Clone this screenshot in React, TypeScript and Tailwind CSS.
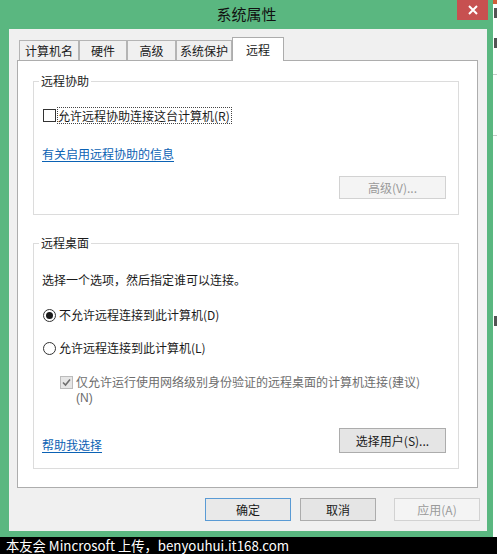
import { ReactNode } from "react";

const cjk = "font-['Microsoft_YaHei_UI','Noto_Sans_CJK_SC',sans-serif]";

function Tab({ label, w, active }: { label: string; w: string; active?: boolean }) {
  if (active) {
    return (
      <div
        className={`relative z-10 -mb-px flex h-[24px] items-center justify-center border border-b-0 border-[#acacac] bg-white text-[12px] text-[#1a1a1a] ${w}`}
      >
        {label}
      </div>
    );
  }
  return (
    <div
      className={`flex h-[20px] items-center justify-center border border-b-0 border-[#b4b4b4] bg-[#f0f0f0] text-[12px] text-[#1a1a1a] ${w}`}
    >
      {label}
    </div>
  );
}

function GroupBox({ title, h, children }: { title: string; h: string; children: ReactNode }) {
  return (
    <div className={`ml-[15px] flex w-[426px] flex-col border border-[#dcdcdc] ${h}`}>
      <div className="-mt-[7px] ml-[5px] h-[12px] w-fit bg-white px-[2px] text-[12px] leading-[12px] text-[#1a1a1a]">
        {title}
      </div>
      {children}
    </div>
  );
}

function Button({ label, w, h = "h-[23px]", disabled, focused }: { label: string; w: string; h?: string; disabled?: boolean; focused?: boolean }) {
  let tone = "border-[#acacac] bg-[#e5e5e5] text-[#1a1a1a]";
  if (disabled) tone = "border-[#d2d2d2] bg-[#f4f4f4] text-[#9a9a9a]";
  if (focused) tone = "border-[#5a9bd5] bg-[#e9e9e9] text-[#1a1a1a]";
  return (
    <div className={`flex items-center justify-center border text-[12px] ${tone} ${w} ${h}`}>
      {label}
    </div>
  );
}

function Radio({ checked }: { checked?: boolean }) {
  return (
    <div className="flex h-[13px] w-[13px] shrink-0 items-center justify-center rounded-full border border-[#333] bg-white">
      {checked && <div className="h-[7px] w-[7px] rounded-full bg-[#1a1a1a]" />}
    </div>
  );
}

function Check({ disabled }: { disabled?: boolean }) {
  if (!disabled) {
    return <div className="h-[13px] w-[13px] shrink-0 border border-[#333] bg-white" />;
  }
  return (
    <div className="flex h-[13px] w-[13px] shrink-0 items-center justify-center border border-[#bcbcbc] bg-[#e6e6e6]">
      <svg width="9" height="9" viewBox="0 0 9 9">
        <path d="M1 4.5 L3.5 7 L8 1.5" fill="none" stroke="#6f6f6f" strokeWidth="1.6" />
      </svg>
    </div>
  );
}

export default function App() {
  return (
    <div className={`flex h-[554px] w-[497px] flex-col overflow-hidden bg-black ${cjk}`}>
      <div className="flex h-[537px]">
        {/* window */}
        <div className="flex w-[493px] flex-col bg-[#5ab780]">
          <div className="grid h-[29px] grid-cols-[1fr_auto_1fr]">
            <div />
            <div className="pt-[4px] text-[15px] leading-[20px] text-[#111]">系统属性</div>
            <div className="flex justify-end">
              <div className="mr-[5px] flex h-[20px] w-[31px] items-center justify-center bg-[#c75050]">
                <svg width="10" height="10" viewBox="0 0 10 10">
                  <path d="M1 1 L9 9 M9 1 L1 9" stroke="white" strokeWidth="2" />
                </svg>
              </div>
            </div>
          </div>

          <div className="ml-[9px] flex h-[502px] w-[478px] flex-col bg-[#f0f0f0] pt-[8px]">
            <div className="ml-[10px] flex h-[23px] items-end">
              <Tab label="计算机名" w="w-[60px]" />
              <Tab label="硬件" w="w-[48px]" />
              <Tab label="高级" w="w-[49px]" />
              <Tab label="系统保护" w="w-[56px]" />
              <Tab label="远程" w="w-[52px]" active />
            </div>

            <div className="ml-[8px] flex h-[428px] w-[461px] flex-col border border-[#adadad] bg-white">
              <div className="h-[20px]" />
              <GroupBox title="远程协助" h="h-[134px]">
                <div className="ml-[9px] mt-[20px] flex h-[17px] items-center">
                  <Check />
                  <div className="ml-[1px] flex h-[17px] items-center border border-dotted border-[#444] pr-[1px] text-[12px] text-[#1a1a1a]">
                    允许远程协助连接这台计算机(R)
                  </div>
                </div>
                <div className="ml-[8px] mt-[23px] h-[14px] w-fit text-[12px] leading-[14px] text-[#0b62b4] underline underline-offset-2">
                  有关启用远程协助的信息
                </div>
                <div className="mr-[12px] mt-[15px] self-end">
                  <Button label="高级(V)..." w="w-[107px]" disabled />
                </div>
              </GroupBox>

              <div className="h-[28px]" />
              <GroupBox title="远程桌面" h="h-[226px]">
                <div className="ml-[8px] mt-[24px] flex h-[14px] items-center text-[12px] text-[#1a1a1a]">
                  选择一个选项，然后指定谁可以连接。
                </div>
                <div className="ml-[9px] mt-[20px] flex h-[16px] items-center gap-[3px] text-[12px] text-[#1a1a1a]">
                  <Radio checked />
                  <span>不允许远程连接到此计算机(D)</span>
                </div>
                <div className="ml-[9px] mt-[17px] flex h-[16px] items-center gap-[3px] text-[12px] text-[#1a1a1a]">
                  <Radio />
                  <span>允许远程连接到此计算机(L)</span>
                </div>
                <div className="ml-[26px] mt-[19px] flex items-start gap-[3px] text-[12px] text-[#6d6d6d]">
                  <div className="mt-[1px]">
                    <Check disabled />
                  </div>
                  <div className="flex flex-col">
                    <div className="flex h-[14px] items-center">仅允许运行使用网络级别身份验证的远程桌面的计算机连接(建议)</div>
                    <div className="mt-[2px] flex h-[14px] items-center font-['Liberation_Sans',sans-serif]">(N)</div>
                  </div>
                </div>
                <div className="mr-[12px] mt-[23px] flex items-start justify-between">
                  <div className="ml-[8px] mt-[10px] h-[14px] text-[12px] leading-[14px] text-[#0b62b4] underline underline-offset-2">
                    帮助我选择
                  </div>
                  <Button label="选择用户(S)..." w="w-[107px]" h="h-[25px]" />
                </div>
              </GroupBox>
            </div>

            <div className="ml-[196px] mt-[10px] flex">
              <Button label="确定" w="w-[86px]" focused />
              <div className="ml-[9px]">
                <Button label="取消" w="w-[76px]" />
              </div>
              <div className="ml-[18px]">
                <Button label="应用(A)" w="w-[86px]" disabled />
              </div>
            </div>
          </div>
        </div>

        {/* sliver of the window behind */}
        <div className="flex w-[4px] flex-col bg-white">
          <div className="h-[4px] bg-[#d0603a]" />
          <div className="ml-[1px] mt-[4px] h-[10px] w-[3px] bg-[#555]" />
          <div className="ml-[1px] mt-[20px] h-[10px] w-[3px] bg-[#555]" />
          <div className="mt-[26px] h-px bg-[#ccc]" />
          <div className="mt-[60px] h-px bg-[#ccc]" />
          <div className="ml-[1px] mt-[180px] h-[10px] w-[3px] bg-[#555]" />
        </div>
      </div>

      <div className="flex h-[17px] items-center pl-[6px] text-[13.3px] leading-[17px] text-white">
        本友会 Mincrosoft 上传，benyouhui.it168.com
      </div>
    </div>
  );
}
